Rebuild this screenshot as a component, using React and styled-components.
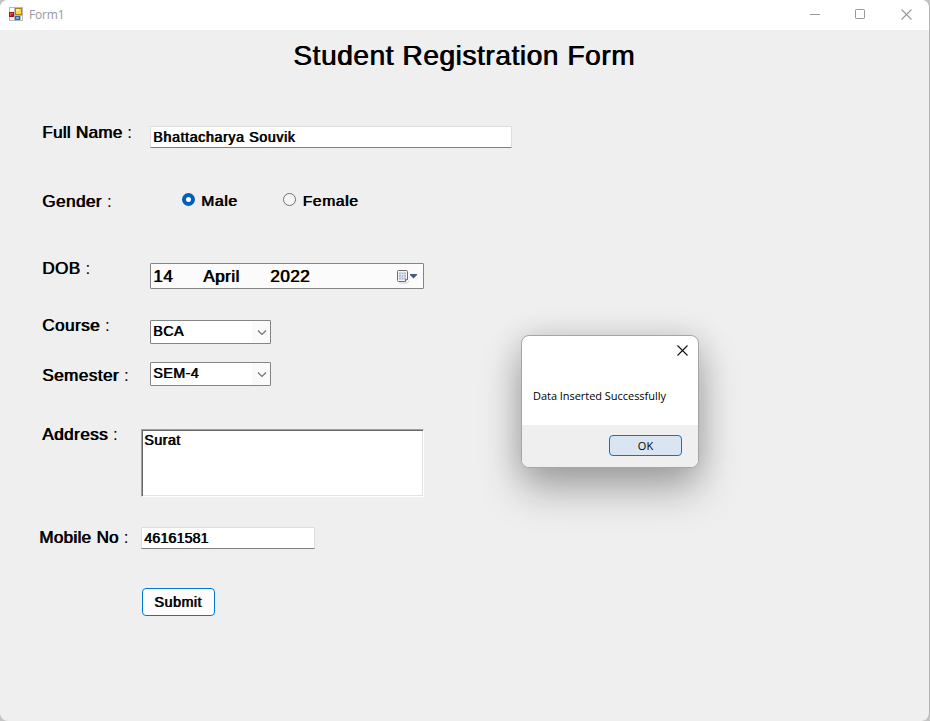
import React from "react";
import styled, { createGlobalStyle, css } from "styled-components";

const GlobalStyle = createGlobalStyle`
  * { box-sizing: border-box; }
  body { margin: 0; background: #c4c4c4; overflow: hidden; }
`;

const heavy = css`
  font-family: "Liberation Sans", Arial, sans-serif;
  font-weight: 400;
  color: #000;
  text-shadow: 0.8px 0 0 #000;
  letter-spacing: 0.5px;
`;

const Window = styled.div`
  width: 930px;
  height: 721px;
  background: #efefef;
  border-right: 1px solid #b4b4b4;
  border-radius: 8px;
  overflow: hidden;
`;

const TitleBar = styled.header`
  display: flex;
  align-items: center;
  height: 30px;
  padding: 0 17px 2px 9px;
  background: #fff;
`;

const Caption = styled.span`
  flex: 1;
  margin: 2px 0 0 6px;
  font: 12px/16px "Open Sans", "Noto Sans", sans-serif;
  letter-spacing: -0.2px;
  color: #999;
`;

const CaptionButtons = styled.div`
  display: flex;
  gap: 35px;
`;

const Heading = styled.h1`
  ${heavy}
  margin: 0;
  padding: 11px 0 0 293px;
  height: 92px;
  font-size: 28px;
  line-height: 30px;
  letter-spacing: 0.6px;
  white-space: nowrap;
`;

const Row = styled.div`
  display: flex;
  align-items: flex-start;
  height: ${(p) => p.$height}px;
  padding-left: ${(p) => p.$indent || 42}px;
`;

const LabelText = styled.label`
  ${heavy}
  flex: none;
  width: ${(p) => p.$width || 108}px;
  margin-top: ${(p) => p.$drop || 0}px;
  font-size: 17px;
  line-height: 21px;
  letter-spacing: ${(p) => p.$spacing || 0.5}px;
  white-space: pre;
`;

const Colon = styled.span`
  text-shadow: none;
`;

const TextInput = styled.input`
  ${heavy}
  width: ${(p) => p.$width}px;
  height: 22px;
  margin-top: ${(p) => p.$drop || 0}px;
  padding: 0 0 1px 2px;
  border: 1px solid #dedede;
  border-bottom-color: #808080;
  border-radius: 1px;
  background: #fff;
  outline: none;
  font-size: 14.2px;
  letter-spacing: ${(p) => (p.$numeric ? 0.15 : 0.64)}px;
`;

const Radios = styled.div`
  display: flex;
  gap: 46px;
  margin-left: 32px;
`;

const Radio = styled.label`
  ${heavy}
  display: flex;
  font-size: 15.5px;
  line-height: 20px;
  letter-spacing: 0.7px;
`;

const Dot = styled.span`
  width: 13px;
  height: 13px;
  margin: 2px 6px 0 0;
  border-radius: 50%;
  border: ${(p) => (p.$on ? "4px solid #005fb8" : "1px solid #707070")};
  background: ${(p) => (p.$on ? "#fff" : "#f5f5f5")};
`;

const DateField = styled.div`
  ${heavy}
  display: flex;
  align-items: center;
  width: 274px;
  height: 26px;
  margin-top: 5px;
  padding: 1px 6px 0 2px;
  border: 1px solid #858585;
  border-radius: 1px;
  background: #fbfbfb;
  font-size: 17px;
`;

const DatePart = styled.span`
  width: ${(p) => p.$width}px;
`;

const Combo = styled.div`
  ${heavy}
  display: flex;
  justify-content: space-between;
  width: 121px;
  height: 24px;
  margin-top: ${(p) => p.$drop || 0}px;
  padding: 2px 3px 0 2px;
  border: 1px solid #858585;
  border-radius: 1px;
  background: linear-gradient(to right, #fff 101px, #fafafa 101px);
  font-size: 14.2px;
  line-height: 17px;
`;

const Address = styled.textarea`
  ${heavy}
  width: 283px;
  height: 68px;
  margin-top: 5px;
  padding: 2px 0 0 2px;
  resize: none;
  outline: none;
  background: #fff;
  border: 1px solid;
  border-color: #a0a0a0 #fff #fff #a0a0a0;
  box-shadow: inset 1px 1px 0 #696969, inset -1px -1px 0 #e3e3e3;
  font-size: 14.2px;
  line-height: 17px;
`;

const SubmitButton = styled.button`
  ${heavy}
  width: 73px;
  height: 28px;
  padding: 0 1px 1px 0;
  border: 1px solid #0078d4;
  border-radius: 4px;
  background: #fdfdfd;
  font-size: 14.2px;
  letter-spacing: 0.6px;
`;

const Dialog = styled.section`
  position: absolute;
  left: 521px;
  top: 335px;
  display: flex;
  flex-direction: column;
  width: 178px;
  height: 133px;
  border: 1px solid #a5a5a5;
  border-radius: 8px;
  overflow: hidden;
  background: #fff;
  font: 11px/16px "Open Sans", "Noto Sans", sans-serif;
  color: #000;
  box-shadow: 0 22px 42px rgba(0, 0, 0, 0.29), 0 2px 32px rgba(0, 0, 0, 0.14);
`;

const DialogTop = styled.div`
  display: flex;
  justify-content: flex-end;
  height: 52px;
  padding: 8.5px 10px 0 0;
`;

const Message = styled.p`
  margin: 0;
  height: 37px;
  padding-left: 11px;
  letter-spacing: -0.04px;
  white-space: nowrap;
`;

const DialogFooter = styled.footer`
  display: flex;
  justify-content: flex-end;
  flex: 1;
  padding: 10px 16px 0 0;
  background: #efefef;
`;

const OkButton = styled.button`
  width: 73px;
  height: 21px;
  padding: 1px 0 0;
  border: 1px solid #0078d4;
  border-radius: 4px;
  background: #d9e6f1;
  font: inherit;
  color: #000;
`;

const FormIcon = () => (
  <svg width="14" height="14" viewBox="0 0 14 14" shapeRendering="crispEdges">
    <path fill="#b9b9b9" d="M0 0h14v14H0z" />
    <path fill="#fff" d="M1 1h4v4H1zM1 10h4v3H1zM12 9h1v4h-1z" />
    <path fill="#a80f0f" d="M0 5h5v5H0z" />
    <path fill="#e85c4a" d="M1 6h3v3H1z" />
    <path fill="#b71c16" d="M2 7h2v2H2z" />
    <path fill="#b98200" d="M6 1h7v7H6z" />
    <path fill="#ffd640" d="M7 2h5v5H7z" />
    <path fill="#fff0a0" d="M7 2h3v2H7z" />
    <path fill="#2f62c4" d="M6 9h5v4H6z" />
    <path fill="#77a5f0" d="M7 10h3v2H7z" />
  </svg>
);

const Cross = ({ color }) => (
  <svg width="11" height="11" viewBox="0 0 11 11" fill="none" stroke={color} strokeWidth="1.1">
    <path d="M.5.5l10 10M10.5.5l-10 10" />
  </svg>
);

const Chevron = () => (
  <svg width="10" height="20" viewBox="0 0 10 20" fill="none" stroke="#707070" strokeWidth="1.1">
    <path d="M1 7.5l4 4 4-4" />
  </svg>
);

const CalendarIcon = () => (
  <svg width="20" height="14" viewBox="0 0 20 14">
    <path d="M2 13h8l2-2" stroke="#ccc" fill="none" />
    <path d="M.5 1.5q0-1 1-1h8q1 0 1 1v8l-2 2h-7q-1 0-1-1z" fill="#f5f6fa" stroke="#77696a" />
    <path d="M2 2.5h7v7H2z" fill="#a9b4cc" />
    <path d="M2 4.5h7M2 7h7M4.3 2.5v7M6.7 2.5v7" stroke="#f0f3fa" strokeWidth=".7" />
    <path d="M8.5 11.5v-2h2" stroke="#77696a" fill="#fff" />
    <path d="M13 4h7v1l-3.5 3.5L13 5z" fill="#465b88" />
  </svg>
);

const Label = ({ text, ...rest }) => (
  <LabelText {...rest}>
    {text} <Colon>:</Colon>
  </LabelText>
);

export default function App() {
  return (
    <>
      <GlobalStyle />
      <Window>
        <TitleBar>
          <FormIcon />
          <Caption>Form1</Caption>
          <CaptionButtons>
            <svg width="11" height="11"><path d="M1 5.5h10" stroke="#999" /></svg>
            <svg width="11" height="11"><rect x=".5" y=".5" width="9" height="9" rx=".7" fill="none" stroke="#999" /></svg>
            <Cross color="#999" />
          </CaptionButtons>
        </TitleBar>
        <Heading>Student Registration Form</Heading>
        <Row $height={69}>
          <Label text="Full Name" $spacing={0.3} />
          <TextInput $width={362} $drop={4} defaultValue="Bhattacharya Souvik" spellCheck={false} />
        </Row>
        <Row $height={67}>
          <Label text="Gender" />
          <Radios>
            <Radio><Dot $on />Male</Radio>
            <Radio><Dot />Female</Radio>
          </Radios>
        </Row>
        <Row $height={57}>
          <Label text="DOB" />
          <DateField>
            <DatePart $width={50}>14</DatePart>
            <DatePart $width={67}>April</DatePart>
            <DatePart $width={127}>2022</DatePart>
            <CalendarIcon />
          </DateField>
        </Row>
        <Row $height={47}>
          <Label text="Course" />
          <Combo $drop={5}>BCA<Chevron /></Combo>
        </Row>
        <Row $height={62}>
          <Label text="Semester" $drop={3} />
          <Combo>SEM-4<Chevron /></Combo>
        </Row>
        <Row $height={103}>
          <Label text="Address" $width={99} />
          <Address defaultValue="Surat" spellCheck={false} />
        </Row>
        <Row $height={61} $indent={39}>
          <Label text="Mobile No" $width={102} $spacing={0.34} />
          <TextInput $width={174} $numeric defaultValue="46161581" />
        </Row>
        <Row $height={28} $indent={142}>
          <SubmitButton>Submit</SubmitButton>
        </Row>
      </Window>
      <Dialog role="dialog">
        <DialogTop><Cross color="#111" /></DialogTop>
        <Message>Data Inserted Successfully</Message>
        <DialogFooter><OkButton>OK</OkButton></DialogFooter>
      </Dialog>
    </>
  );
}
